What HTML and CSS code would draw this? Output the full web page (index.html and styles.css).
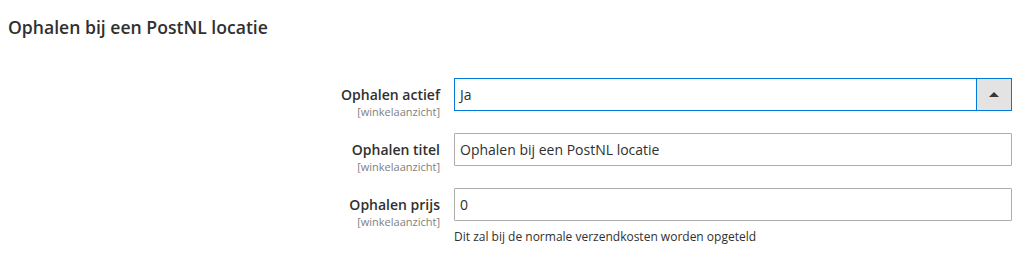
FILE: index.html
```html
<!DOCTYPE html>
<html lang="nl">
<head>
    <meta charset="UTF-8">
    <title>Ophalen bij een PostNL locatie</title>
    <link rel="stylesheet" href="styles.css">
</head>
<body>

<div class="section">

    <!-- Kop van de sectie -->
    <h3 class="section-title">Ophalen bij een PostNL locatie</h3>

    <div class="fields">

        <div class="field">
            <div class="field-label">
                <span class="label-text">Ophalen actief</span>
                <span class="scope">[winkelaanzicht]</span>
            </div>
            <div class="field-control">
                <div class="select focused">
                    <span class="select-value">Ja</span>
                    <span class="select-button"><span class="arrow"></span></span>
                </div>
            </div>
        </div>

        <div class="field">
            <div class="field-label">
                <span class="label-text">Ophalen titel</span>
                <span class="scope">[winkelaanzicht]</span>
            </div>
            <div class="field-control">
                <input class="input-text" type="text" value="Ophalen bij een PostNL locatie">
            </div>
        </div>

        <div class="field">
            <div class="field-label">
                <span class="label-text">Ophalen prijs</span>
                <span class="scope">[winkelaanzicht]</span>
            </div>
            <div class="field-control">
                <input class="input-text" type="text" value="0">
                <div class="note">Dit zal bij de normale verzendkosten worden opgeteld</div>
            </div>
        </div>

    </div>
</div>

</body>
</html>
```

FILE: styles.css
```css
body {
    margin: 0;
    background: #ffffff;
    font-family: "Open Sans", "Liberation Sans", sans-serif;
    color: #303030;
}
.section {
    padding: 0 8px;
}
.section-title {
    margin: 0;
    padding-top: 16px;
    height: 78px;
    box-sizing: border-box;
    font-size: 17.6px;
    font-weight: 600;
    line-height: 22px;
    color: #303030;
}
.fields {
    display: flex;
    flex-direction: column;
    gap: 15px;
}
.field {
    display: grid;
    grid-template-columns: 432px 558px;
    column-gap: 14px;
    align-items: start;
}
.field-label {
    display: flex;
    flex-direction: column;
    align-items: flex-end;
    text-align: right;
    padding-top: 7px;
}
.label-text {
    font-size: 14px;
    font-weight: 600;
    line-height: 19px;
}
.scope {
    margin-top: 1px;
    font-size: 11px;
    line-height: 13px;
    color: #808080;
}
.field-control {
    display: flex;
    flex-direction: column;
}
.input-text {
    box-sizing: border-box;
    width: 100%;
    height: 33px;
    margin: 0;
    padding: 0 5px;
    border: 1px solid #adadad;
    border-radius: 1px;
    font-family: inherit;
    font-size: 14px;
    color: #303030;
    outline: none;
}
.select {
    box-sizing: border-box;
    display: flex;
    height: 33px;
    border: 1px solid #adadad;
}
.select.focused {
    border-color: #007bdb;
}
.select-value {
    flex: 1;
    padding: 0 5px;
    font-size: 14px;
    line-height: 31px;
}
.select-button {
    width: 34px;
    display: flex;
    align-items: center;
    justify-content: center;
    background: #e3e3e3;
    border-left: 1px solid #007bdb;
}
.arrow {
    width: 0;
    height: 0;
    border-left: 5px solid transparent;
    border-right: 5px solid transparent;
    border-bottom: 5px solid #41362f;
}
.note {
    margin-top: 8px;
    font-size: 12px;
    line-height: 16px;
    color: #303030;
}
```
